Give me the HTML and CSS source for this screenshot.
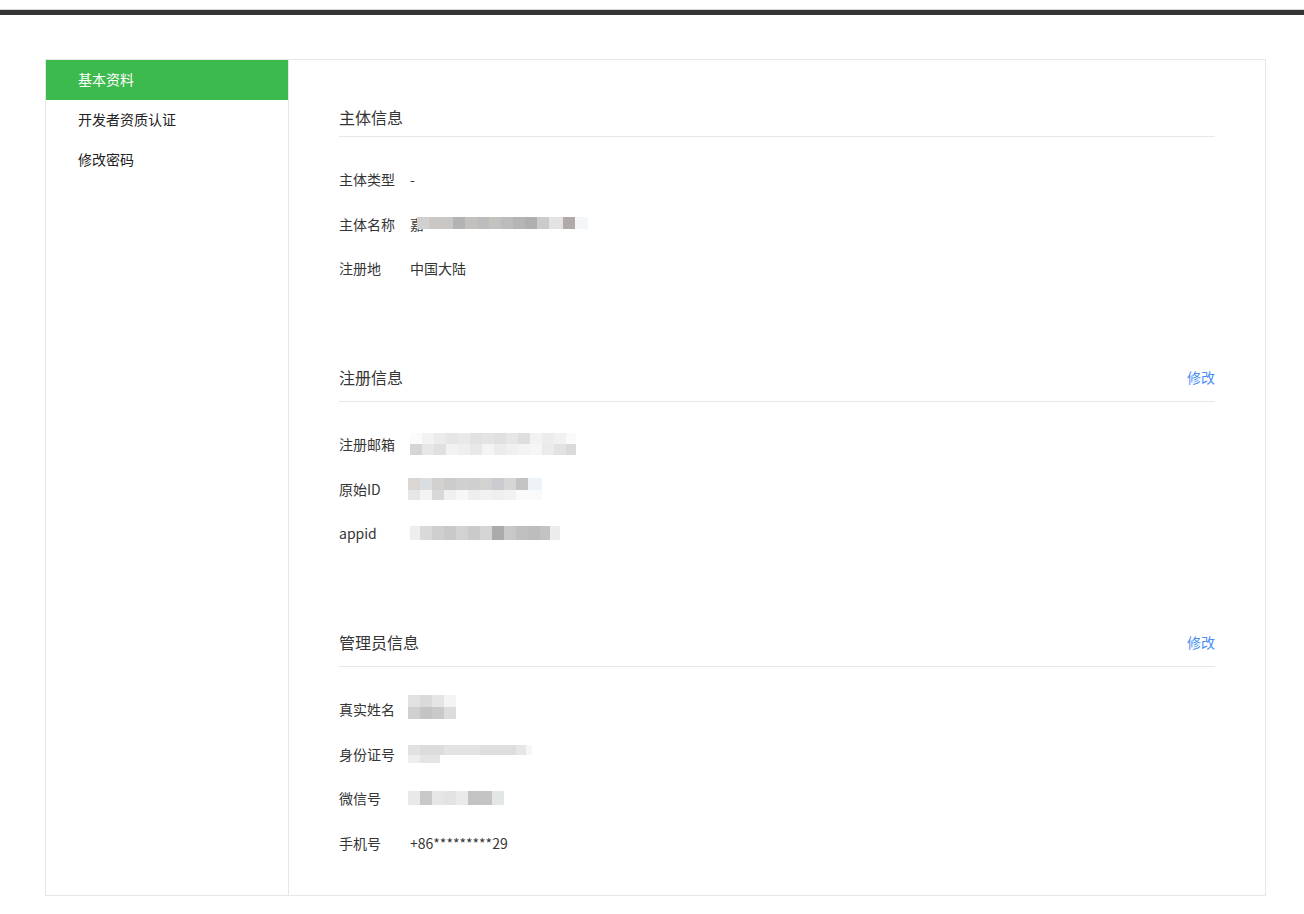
FILE: index.html
```html
<!DOCTYPE html>
<html lang="zh-CN">
<head>
<meta charset="utf-8">
<title>基本资料</title>
<link rel="stylesheet" href="styles.css">
</head>
<body>
<div class="topbar"></div>
<div class="card">
  <nav class="sidebar">
    <a class="menu-item active">基本资料</a>
    <a class="menu-item">开发者资质认证</a>
    <a class="menu-item">修改密码</a>
  </nav>
  <main class="content">
    <section class="section">
      <div class="section-head">
        <h2 class="section-title">主体信息</h2>
      </div>
      <div class="rows">
        <div class="row"><span class="label">主体类型</span><span class="value">-</span></div>
        <div class="row"><span class="label">主体名称</span><span class="value">嘉<span class="mosaic m1"></span></span></div>
        <div class="row"><span class="label">注册地</span><span class="value">中国大陆</span></div>
      </div>
    </section>
    <section class="section">
      <div class="section-head">
        <h2 class="section-title">注册信息</h2>
        <a class="edit-link">修改</a>
      </div>
      <div class="rows">
        <div class="row"><span class="label">注册邮箱</span><span class="value"><span class="mosaic m2"></span></span></div>
        <div class="row"><span class="label">原始ID</span><span class="value"><span class="mosaic m3"></span></span></div>
        <div class="row"><span class="label">appid</span><span class="value"><span class="mosaic m4"></span></span></div>
      </div>
    </section>
    <section class="section">
      <div class="section-head">
        <h2 class="section-title">管理员信息</h2>
        <a class="edit-link">修改</a>
      </div>
      <div class="rows">
        <div class="row"><span class="label">真实姓名</span><span class="value"><span class="mosaic m5"></span></span></div>
        <div class="row"><span class="label">身份证号</span><span class="value"><span class="mosaic m6"></span></span></div>
        <div class="row"><span class="label">微信号</span><span class="value"><span class="mosaic m7"></span></span></div>
        <div class="row"><span class="label">手机号</span><span class="value">+86*********29</span></div>
      </div>
    </section>
  </main>
</div>
</body>
</html>
```

FILE: styles.css
```css
html, body {
  margin: 0;
  padding: 0;
  background: #fff;
}
body {
  font-family: "Noto Sans CJK SC", "Noto Sans", sans-serif;
  font-size: 14px;
  color: #353535;
}
.topbar {
  margin-top: 9px;
  border-top: 1px solid #d6d6d6;
  height: 5px;
  background: #353535;
}
.card {
  margin: 44px 0 0 45px;
  width: 1221px;
  box-sizing: border-box;
  border: 1px solid #e7e7eb;
  display: flex;
}
.sidebar {
  width: 243px;
  flex: none;
  box-sizing: border-box;
  border-right: 1px solid #e7e7eb;
  display: flex;
  flex-direction: column;
}
.menu-item {
  display: block;
  height: 40px;
  line-height: 38px;
  padding-left: 32px;
  box-sizing: border-box;
  color: #222;
  cursor: pointer;
}
.menu-item.active {
  background: #3dba4e;
  color: #fff;
}
.content {
  flex: 1;
  padding: 40px 50px 30px;
}
.section + .section {
  margin-top: 64.5px;
}
.section-head {
  display: flex;
  align-items: center;
  justify-content: space-between;
  min-height: 36px;
  border-bottom: 1px solid #e7e7eb;
}
.section-title {
  margin: 0 0 3px;
  font-size: 16px;
  font-weight: normal;
  line-height: 24px;
  color: #353535;
}
.edit-link {
  color: #4a8ff5;
  line-height: 22px;
  padding: 11px 0 13px;
  cursor: pointer;
}
.rows {
  padding-top: 20px;
}
.row {
  display: flex;
  align-items: center;
  height: 44.5px;
}
.label {
  width: 71px;
  flex: none;
}
.value {
  display: flex;
  align-items: center;
  color: #353535;
}
.mosaic {
  display: inline-block;
  background-repeat: no-repeat;
}
.m1 {
  width: 171px;
  height: 12px;
  margin-left: -7px;
  margin-top: -1px;
  background: linear-gradient(90deg, #d0d0d0 0 12px, #cac7c5 12px 24px, #c9c6c4 24px 36px, #b3b3b3 36px 48px, #c3c0be 48px 60px, #bdbdbd 60px 72px, #c4c2bf 72px 84px, #bcbcbc 84px 96px, #b5b5b5 96px 108px, #afafaf 108px 120px, #cbcbcb 120px 132px, #e3e3e3 132px 146px, #b0aba8 146px 158px, #f4f7fa 158px 171px);
}
.m2 {
  width: 166px;
  height: 22px;
  background:
    linear-gradient(90deg, #fbfbfb 0 12px, #f2f2f2 12px 24px, #ebebeb 24px 36px, #e6e6e6 36px 48px, #e9e9e9 48px 60px, #e2e2e2 60px 72px, #e4e4e4 72px 84px, #e0e0e0 84px 96px, #e6e6e6 96px 108px, #dedede 108px 120px, #f2f2f2 120px 132px, #ececec 132px 144px, #f1f1f1 144px 156px, #fafafa 156px 166px) top / 100% 11px no-repeat,
    linear-gradient(90deg, #d5d5d5 0 12px, #e7e7e7 12px 24px, #e0e0e0 24px 36px, #f2f2f2 36px 48px, #efefef 48px 60px, #e8e8e8 60px 72px, #f4f4f4 72px 84px, #ececec 84px 96px, #f0f0f0 96px 108px, #f4f4f4 108px 120px, #f6f6f6 120px 132px, #ebebeb 132px 144px, #e2e2e2 144px 156px, #dadada 156px 166px) bottom / 100% 11px no-repeat;
}
.m3 {
  width: 134px;
  height: 22px;
  margin-left: -2px;
  background:
    linear-gradient(90deg, #d9d6d4 0 12px, #dadde2 12px 24px, #d3d0ce 24px 36px, #cccccc 36px 48px, #d0d0d0 48px 60px, #cfcfcf 60px 72px, #d4d2d0 72px 84px, #cbcccf 84px 96px, #d6d6d6 96px 108px, #c3c3c3 108px 120px, #eef3f8 120px 134px) top / 100% 12px no-repeat,
    linear-gradient(90deg, #e6e6e6 0 12px, #f4f4f4 12px 24px, #d8d8d8 24px 36px, #f0f0f0 36px 48px, #f7f7f7 48px 60px, #eeeeee 60px 72px, #f2f2f2 72px 84px, #efefef 84px 96px, #f2f2f2 96px 108px, #fafafa 108px 134px) bottom / 100% 10px no-repeat;
}
.m4 {
  width: 150px;
  height: 14px;
  background: linear-gradient(90deg, #eeeeee 0 10px, #d9d9d9 10px 22px, #cfcfcf 22px 34px, #c9c9c9 34px 46px, #d2d2d2 46px 58px, #cacaca 58px 70px, #d5d5d5 70px 82px, #ababab 82px 94px, #c8c8c8 94px 106px, #c0c0c0 106px 118px, #bdbdbd 118px 130px, #c3c3c3 130px 140px, #ececec 140px 150px);
}
.m5 {
  width: 48px;
  height: 24px;
  margin-left: -2px;
  margin-top: -4px;
  background:
    linear-gradient(90deg, #e1e1e1 0 12px, #dadada 12px 24px, #e5e5e5 24px 36px, #f4f4f4 36px 48px) top / 100% 12px no-repeat,
    linear-gradient(90deg, #d0d0d0 0 12px, #c4c4c4 12px 24px, #c9c9c9 24px 36px, #dcdcdc 36px 48px) bottom / 100% 12px no-repeat;
}
.m6 {
  width: 124px;
  height: 18px;
  margin-left: -2px;
  background:
    linear-gradient(90deg, #e2e2e2 0 12px, #dcdcdc 12px 36px, #e3e3e3 36px 72px, #dedede 72px 108px, #e6e6e6 108px 118px, #f6f6f6 118px 124px) top / 100% 10px no-repeat,
    linear-gradient(90deg, #eeeeee 0 12px, #e4e4e4 12px 32px, #ffffff 32px 124px) bottom / 100% 8px no-repeat;
}
.m7 {
  width: 96px;
  height: 14px;
  margin-left: -2px;
  background: linear-gradient(90deg, #e9e9e9 0 12px, #c8c8c8 12px 24px, #e6e6e6 24px 36px, #e3e3e3 36px 48px, #eaeaea 48px 60px, #c3c3c3 60px 72px, #c4c4c4 72px 84px, #e3e6e6 84px 96px);
}
```
